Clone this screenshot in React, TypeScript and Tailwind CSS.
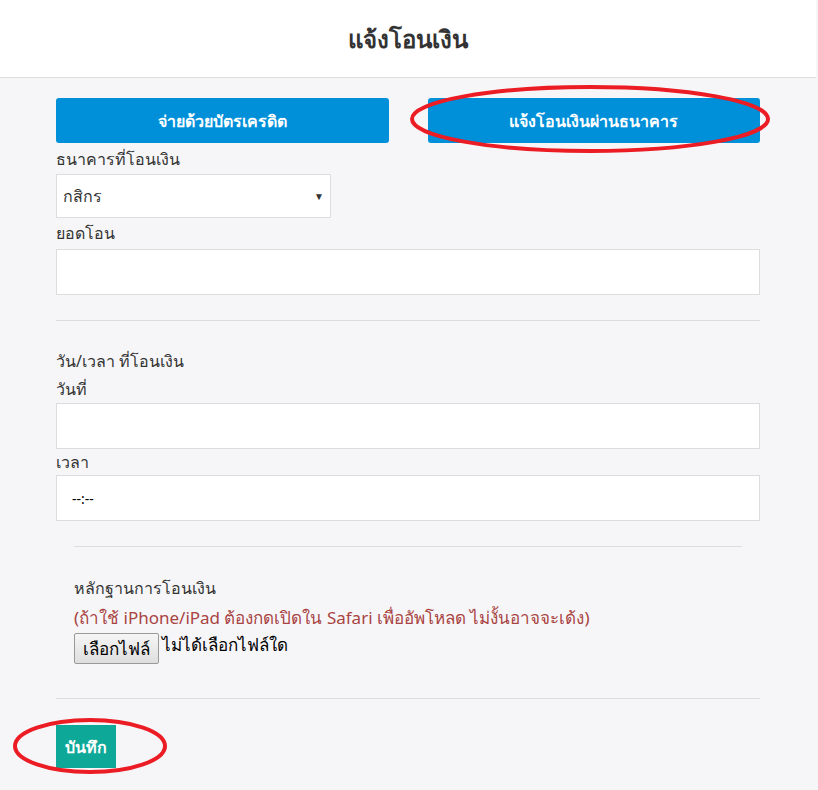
export default function App() {
  return (
    <div className="relative min-h-[790px] w-[818px] bg-[#f6f6f8] font-['Noto_Sans',sans-serif] text-[#333]">
      <header className="flex h-[78px] w-[816px] items-center justify-center border-b border-[#ddd] bg-white">
        <h1 className="text-[24px] font-semibold">แจ้งโอนเงิน</h1>
      </header>

      <div className="w-[816px] px-[56px] pt-[20px]">
        <div className="flex gap-[39px]">
          <button className="h-[45px] flex-1 rounded-[3px] bg-[#0090d9] text-[16px] font-semibold text-white">
            จ่ายด้วยบัตรเครดิต
          </button>
          <button className="h-[45px] flex-1 rounded-[3px] bg-[#0090d9] text-[16px] font-semibold text-white">
            แจ้งโอนเงินผ่านธนาคาร
          </button>
        </div>

        <label className="mt-[2px] block text-[16px] leading-[28px]">ธนาคารที่โอนเงิน</label>
        <div className="mt-[1px] flex h-[44px] w-[275px] items-center justify-between border border-[#ddd] bg-white pl-[6px] pr-[6px]">
          <span className="text-[16px]">กสิกร</span>
          <span className="text-[10px]">▼</span>
        </div>

        <label className="block text-[16px] leading-[31px]">ยอดโอน</label>
        <div className="h-[46px] w-full border border-[#ddd] bg-white" />

        <hr className="mt-[25px] border-t border-[#ddd]" />

        <p className="mt-[26px] text-[16px] leading-[28px]">วัน/เวลา ที่โอนเงิน</p>
        <label className="block text-[16px] leading-[28px]">วันที่</label>
        <div className="h-[46px] w-full border border-[#ddd] bg-white" />
        <label className="block text-[16px] leading-[26px]">เวลา</label>
        <div className="flex h-[46px] w-full items-center border border-[#ddd] bg-white pl-[15px] text-[14px] text-black">
          --:--
        </div>

        <div className="px-[18px]">
          <hr className="mt-[25px] border-t border-[#ddd]" />
          <p className="mt-[27px] text-[16px] leading-[28px]">หลักฐานการโอนเงิน</p>
          <p className="mt-[2px] text-[17px] leading-[28px] text-[#a94442]">
            (ถ้าใช้ iPhone/iPad ต้องกดเปิดใน Safari เพื่ออัพโหลด ไม่งั้นอาจจะเด้ง)
          </p>
          <div className="mt-[1px] flex items-start gap-[3px]">
            <button className="h-[31px] rounded-[2px] border border-[#999] bg-gradient-to-b from-[#f6f6f6] to-[#dedede] px-[8px] text-[17px] leading-[20px] text-black">
              เลือกไฟล์
            </button>
            <span className="text-[17px] leading-[24px] text-black">ไม่ได้เลือกไฟล์ใด</span>
          </div>
        </div>

        <hr className="mt-[34px] border-t border-[#ddd]" />

        <button className="mt-[26px] h-[43px] w-[60px] bg-[#0ea898] text-[16px] font-semibold text-white">
          บันทึก
        </button>
      </div>

      <svg className="pointer-events-none absolute left-0 top-0" width="818" height="790">
        <ellipse cx="590" cy="119" rx="178" ry="32" fill="none" stroke="#ec1c24" strokeWidth="4" />
        <ellipse cx="90" cy="746" rx="75" ry="26" fill="none" stroke="#ec1c24" strokeWidth="4" />
      </svg>
    </div>
  );
}
